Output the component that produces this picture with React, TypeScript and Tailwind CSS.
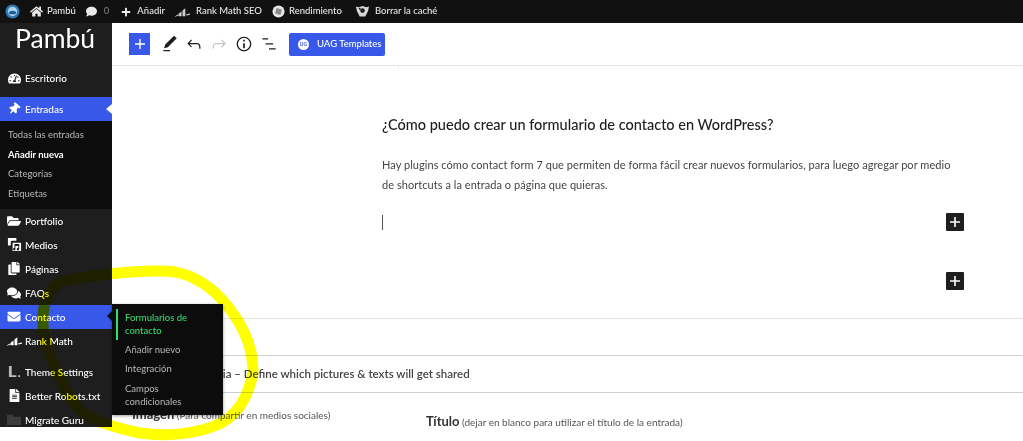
import { FaHome, FaComment, FaPlus, FaTachometerAlt, FaThumbtack, FaFolderOpen, FaCopy, FaEnvelope, FaFileAlt, FaComments } from "react-icons/fa";
import type { ReactNode } from "react";

const font = "font-['Lato','Noto_Sans',sans-serif]";

function RankIcon({ className }: { className?: string }) {
  return (
    <svg viewBox="0 0 16 10" className={className} fill="currentColor">
      <path d="M0 9.500 L3.500 7.500 L4 8.800 L0 10Z" />
      <path d="M4 9.500V6.500L7 4.500V9.500Z" />
      <path d="M8 9.500V3.500L11 1V9.500Z" />
      <path d="M12 7.500 L16 6.500 V8 L12 8.800Z" />
    </svg>
  );
}

function MediaIcon() {
  return (
    <svg viewBox="0 0 16 16" className="w-[15px] h-[15px]" fill="currentColor">
      <path d="M1 1h9v3H5.500A1.500 1.500 0 0 0 4 5.500V9H1Z" />
      <path d="M6 6h9v9H6Zm2 1.500v4.200a1.300 1.300 0 1 0 1 1.300V9.500h3v2.200a1.300 1.300 0 1 0 1 1.300V7.500Z" fillRule="evenodd" />
    </svg>
  );
}

function ThemeIcon() {
  return (
    <svg viewBox="0 0 14 14" className="w-[13px] h-[13px]" fill="#b9b9b9">
      <path d="M1 1h3v10h5v2H1Z" />
      <rect x="11" y="11" width="2" height="2" />
    </svg>
  );
}

function MigrateIcon() {
  return (
    <svg viewBox="0 0 16 14" className="w-[15px] h-[13px]" fill="#3c3c3c">
      <path d="M0 2h6l1 2h8v9H0Z" />
    </svg>
  );
}

function Row({ icon, label, active }: { icon: ReactNode; label: string; active?: boolean }) {
  return (
    <div className={`relative h-6 flex items-center shrink-0 ${active ? "bg-[#3858e9]" : ""}`}>
      <span className="w-[25px] flex justify-center pl-[3px] text-white shrink-0">{icon}</span>
      <span className="text-[10px] pt-px font-medium text-white whitespace-nowrap">{label}</span>
    </div>
  );
}

function SubItem({ label, bold }: { label: string; bold?: boolean }) {
  return (
    <div className={`h-[19.500px] flex items-center pl-2 text-[9.500px] ${bold ? "font-bold text-white" : "text-[#b8b8b8]"}`}>
      {label}
    </div>
  );
}

function BarText({ children, className = "" }: { children: ReactNode; className?: string }) {
  return <span className={`text-[9.500px] font-medium text-[#e8e8e8] whitespace-nowrap ${className}`}>{children}</span>;
}

function WpIcon({ d, className = "" }: { d: string; className?: string }) {
  return (
    <svg viewBox="0 0 24 24" className={`w-5 h-5 ${className}`} fill="currentColor">
      <path d={d} />
    </svg>
  );
}

function PlusSquare() {
  return (
    <div className="w-[18px] h-[18px] bg-[#1e1e1e] flex items-center justify-center rounded-[1px]">
      <svg viewBox="0 0 12 12" className="w-3 h-3" fill="#fff">
        <path d="M5.200 1h1.600v4.200H11v1.600H6.800V11H5.200V6.800H1V5.200h4.200Z" />
      </svg>
    </div>
  );
}

export default function App() {
  return (
    <div className={`relative isolate w-[1023px] h-[441px] overflow-hidden bg-white ${font}`}>
      {/* Admin bar */}
      <div className="h-[23px] bg-[#111111] flex items-center">
        <svg viewBox="0 0 16 16" className="w-[15px] h-[15px] ml-[5px]">
          <circle cx="8" cy="8" r="7.500" fill="#2f78b8" />
          <circle cx="8" cy="8" r="5" fill="#a9d3ee" />
          <path d="M4 9.500c0-3 8-3 8 0l-1 1.500H5Z" fill="#1e5f94" />
        </svg>
        <FaHome className="ml-[10px] text-[#e8e8e8] w-[13px] h-[13px]" />
        <BarText className="ml-[4px]">Pambú</BarText>
        <FaComment className="ml-[10px] text-[#e8e8e8] w-[11px] h-[11px]" />
        <BarText className="ml-[7px] !text-[#777]">0</BarText>
        <FaPlus className="ml-[12px] text-[#eee] w-[10px] h-[10px]" />
        <BarText className="ml-[6px]">Añadir</BarText>
        <RankIcon className="ml-[10px] w-[15px] h-[10px] text-[#ccc]" />
        <BarText className="ml-[6px]">Rank Math SEO</BarText>
        <svg viewBox="0 0 14 14" className="ml-[10px] w-[13px] h-[13px]">
          <circle cx="7" cy="7" r="6.500" fill="#e6e6e6" />
          <rect x="4" y="4" width="6" height="6" fill="#8a8a8a" transform="rotate(15 7 7)" />
        </svg>
        <BarText className="ml-[4px]">Rendimiento</BarText>
        <svg viewBox="0 0 16 14" className="ml-[13px] w-[15px] h-[13px]">
          <path d="M1 1.500l3 1 4-1.500 4 1.500 3-1-1 5-3 6H5l-3-6Z" fill="#d8d8d8" />
          <circle cx="8" cy="6" r="2.500" fill="#222" />
          <circle cx="5" cy="4" r="1" fill="#222" />
        </svg>
        <BarText className="ml-[5px]">Borrar la caché</BarText>
      </div>

      <div className="flex h-[418px]">
        {/* Sidebar */}
        <aside className="w-[112px] h-[404px] shrink-0 bg-[#1e1e1e] flex flex-col overflow-hidden">
          <div className="h-[43px] shrink-0 pl-[15px] text-[26.500px] leading-[31px] text-white font-normal">Pambú</div>
          <Row icon={<FaTachometerAlt className="w-[13px] h-[13px]" />} label="Escritorio" />
          <div className="h-[7px] shrink-0" />
          <Row icon={<FaThumbtack className="w-[12px] h-[12px] rotate-[40deg]" />} label="Entradas" active />
          <div className="bg-[#0c0c0c] pt-[4.500px] pb-[5px] shrink-0">
            <SubItem label="Todas las entradas" />
            <SubItem label="Añadir nueva" bold />
            <SubItem label="Categorías" />
            <SubItem label="Etiquetas" />
          </div>
          <Row icon={<FaFolderOpen className="w-[14px] h-[14px]" />} label="Portfolio" />
          <Row icon={<MediaIcon />} label="Medios" />
          <Row icon={<FaCopy className="w-[12px] h-[13px]" />} label="Páginas" />
          <Row icon={<FaComments className="w-[14px] h-[14px]" />} label="FAQs" />
          <Row icon={<FaEnvelope className="w-[14px] h-[13px]" />} label="Contacto" active />
          <Row icon={<RankIcon className="w-[15px] h-[10px]" />} label="Rank Math" />
          <div className="h-[7px] shrink-0" />
          <Row icon={<ThemeIcon />} label="Theme Settings" />
          <Row icon={<FaFileAlt className="w-[11px] h-[13px]" />} label="Better Robots.txt" />
          <Row icon={<MigrateIcon />} label="Migrate Guru" />
        </aside>

        {/* Editor */}
        <main className="flex-1 min-w-0 flex flex-col">
          <div className="h-[43px] shrink-0 border-b border-[#e4e4e4] flex items-center pl-[17px]">
            <div className="w-[21px] h-[22px] bg-[#3858e9] flex items-center justify-center">
              <svg viewBox="0 0 12 12" className="w-3 h-3" fill="#fff">
                <path d="M5.300 1h1.400v4.300H11v1.400H6.700V11H5.300V6.700H1V5.300h4.300Z" />
              </svg>
            </div>
            <WpIcon className="ml-[10px] text-[#1e1e1e]" d="M20.100 5.100L16.900 2 6.200 12.700l-1.300 4.400 4.500-1.300L20.100 5.100zM4 20.800h8v-1.500H4v1.500z" />
            <WpIcon className="ml-[4px] text-[#1e1e1e]" d="M18.300 11.700c-.6-.6-1.400-.9-2.300-.9H6.700l2.900-3.300-1.100-1-4.500 5L8.500 16l1-1-2.700-2.700H16c.5 0 .9.2 1.300.5 1 1 1 3.400 1 4.500v.3h1.500v-.2c0-1.500 0-4.300-1.500-5.700z" />
            <WpIcon className="ml-[5px] text-[#c4c4c4]" d="M15.600 6.500l-1.100 1 2.900 3.300H8c-.9 0-1.700.3-2.300.9-1.400 1.500-1.400 4.200-1.400 5.600v.2h1.500v-.3c0-1.100 0-3.500 1-4.500.3-.3.700-.5 1.300-.5h9.200L14.500 15l1.100 1.100 4.600-4.600-4.600-5z" />
            <WpIcon className="ml-[5px] text-[#1e1e1e]" d="M12 3.200c-4.800 0-8.800 3.900-8.800 8.800 0 4.800 3.900 8.800 8.800 8.800 4.800 0 8.800-3.900 8.800-8.800 0-4.800-4-8.800-8.800-8.800zm0 16c-4 0-7.200-3.300-7.200-7.200C4.800 8 8 4.800 12 4.800s7.200 3.300 7.200 7.200c0 4-3.200 7.200-7.200 7.200zM11 17h2v-6h-2v6zm0-8h2V7h-2v2z" />
            <WpIcon className="ml-[5px] text-[#1e1e1e]" d="M4 5h7v1.500H4zM8 11h9v1.500H8zM12 17h8v1.500h-8z" />
            <div className="ml-[10px] mt-px w-[96px] h-[23px] bg-[#3858e9] rounded-[2px] flex items-center pl-[9px] text-white text-[9.500px] font-medium whitespace-nowrap">
              <span className="w-[11px] h-[11px] rounded-full bg-white flex items-center justify-center text-[5px] font-bold text-[#3858e9] mr-[8px]">UG</span>
              UAG Templates
            </div>
          </div>

          <div className="relative pl-[270px] pr-[59px] h-[252px] shrink-0">
            <div className="absolute left-[286px] top-0 w-px h-[4px] bg-[#ececec]" />
            <h2 className="mt-[47px] text-[14.500px] leading-[24px] font-medium text-[#1e1e1e]">¿Cómo puedo crear un formulario de contacto en WordPress?</h2>
            <p className="mt-[18px] text-[11px] leading-[20px] tracking-[0.05px] text-[#444]">Hay plugins cómo contact form 7 que permiten de forma fácil crear nuevos formularios, para luego agregar por medio de shortcuts a la entrada o página que quieras.</p>
            <div className="mt-[19px] flex items-start justify-between">
              <div className="w-px h-[15px] mt-px bg-[#555]" />
              <div className="-mt-[1px]"><PlusSquare /></div>
            </div>
            <div className="mt-[41px] flex justify-end"><PlusSquare /></div>
          </div>

          <div className="border-t border-[#e2e2e2] h-[37px] shrink-0" />
          <div className="border-t border-[#cfcfcf] h-[37px] shrink-0 flex items-center pl-[55px] text-[11.500px] font-semibold text-[#444] whitespace-nowrap">Social Media – Define which pictures &amp; texts will get shared</div>
          <div className="border-t border-[#cfcfcf] flex-1 flex items-start pl-[20px]">
            <div className="w-[294px] mt-[12px] text-[10px] leading-[18px] text-[#555]"><b className="text-[13px] font-bold text-[#333]">Imagen</b> (Para compartir en medios sociales)</div>
            <div className="mt-[19px] text-[10px] leading-[18px] text-[#555]"><b className="text-[13px] font-bold text-[#333]">Título</b> (dejar en blanco para utilizar el título de la entrada)</div>
          </div>
        </main>
      </div>

      {/* Arrow of the current menu */}
      <div className="absolute left-[106px] top-[104px] w-0 h-0 border-y-[5px] border-y-transparent border-r-[6px] border-r-white" />

      {/* Highlighter stroke */}
      <svg viewBox="0 0 1023 441" className="absolute inset-0 w-[1023px] h-[441px] pointer-events-none mix-blend-multiply z-10" fill="none">
        <path
          d="M163 271 C130 270 95 275 62 281 C48 288 42 305 43 325 C44 345 52 365 73 403 C85 420 115 428 140 433 C165 437 195 434 217 425 C235 417 248 400 253 372 C253 352 246 332 234 315 C222 297 205 280 180 273 C172 271 168 271 163 271 Z"
          stroke="#ffff00"
          strokeWidth="11"
          strokeLinecap="round"
        />
      </svg>

      {/* Flyout */}
      <div className="absolute z-20 left-[112px] top-[304px] w-[111px] h-[111px] bg-[#0c0c0c] shadow-[0_1px_3px_rgba(0,0,0,0.4)] pt-[5px] text-[9.500px] leading-[12.500px] text-[#b8b8b8]">
        <div className="absolute -left-[5px] top-[7px] w-0 h-0 border-y-[5px] border-y-transparent border-r-[5px] border-r-[#0c0c0c]" />
        <div className="ml-[4px] border-l-[2px] border-[#2ee06f] pl-[7px] pr-1 py-[3px] text-[#37d96f] font-medium h-[31px]">Formularios de contacto</div>
        <div className="pl-[13px] h-[19.500px] flex items-center">Añadir nuevo</div>
        <div className="pl-[13px] h-[19.500px] flex items-center">Integración</div>
        <div className="pl-[13px] pt-[4px] pr-4">Campos condicionales</div>
      </div>
    </div>
  );
}
